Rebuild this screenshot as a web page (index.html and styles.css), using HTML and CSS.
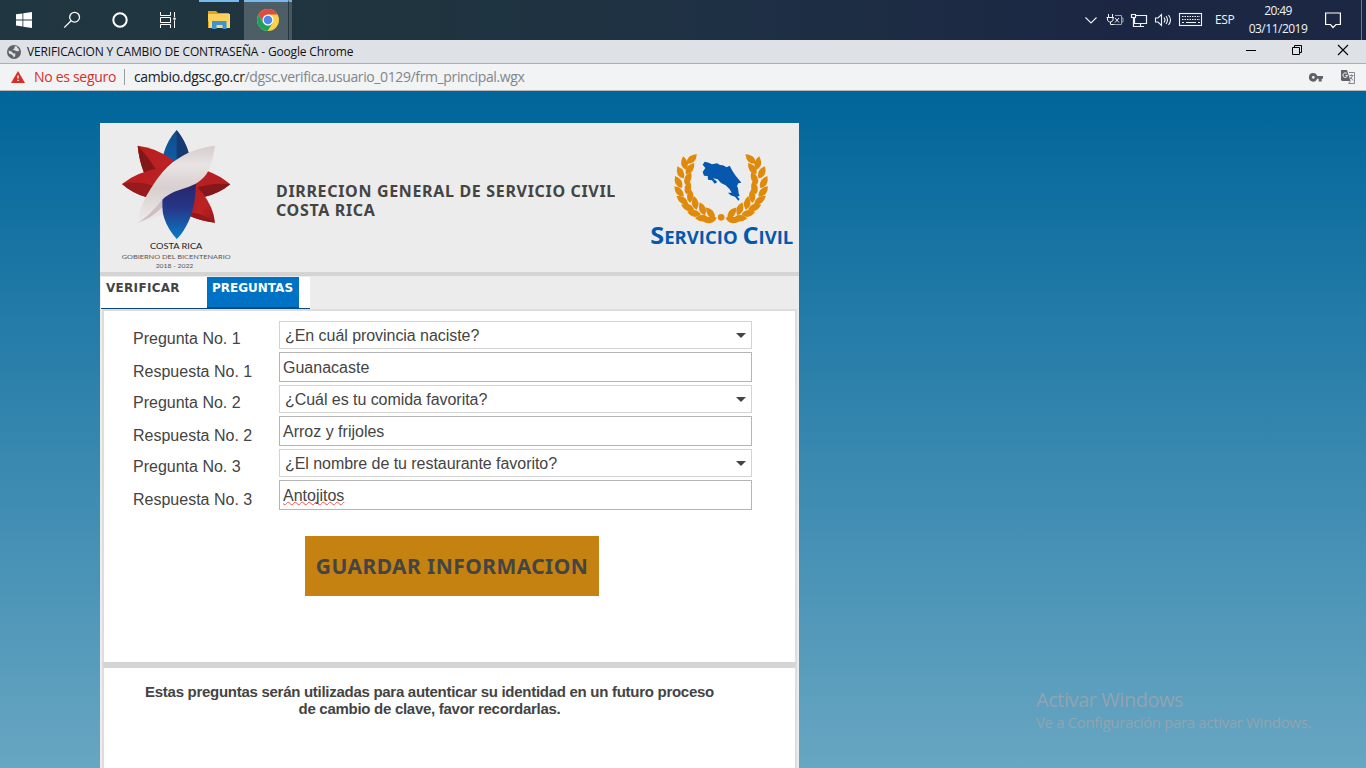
FILE: index.html
```html
<!DOCTYPE html>
<html lang="es">
<head>
<meta charset="utf-8">
<title>VERIFICACION Y CAMBIO DE CONTRASEÑA</title>
<link rel="stylesheet" href="styles.css">
</head>
<body>
<header class="taskbar">
  <div class="launchers">
    <div class="launcher"><svg width="16" height="16" viewBox="0 0 16 16" fill="#fff"><path d="M0 2.3 6.5 1.4V7.6H0zM7.3 1.2 16 0V7.6H7.3zM0 8.4H6.5V14.5L0 13.6zM7.3 8.4H16V16L7.3 14.7z"/></svg></div>
    <div class="launcher"><svg width="18" height="18" viewBox="0 0 18 18" fill="none" stroke="#fff" stroke-width="1.3"><circle cx="11.6" cy="6.2" r="4.9"/><path d="M8.1 9.7 1.2 16.6"/></svg></div>
    <div class="launcher"><svg width="18" height="18" viewBox="0 0 18 18" fill="none" stroke="#fff" stroke-width="2"><circle cx="9" cy="9" r="6.7"/></svg></div>
    <div class="launcher"><svg width="18" height="16" viewBox="0 0 18 16" fill="none" stroke="#fff"><path d="M1.5 0V3.5H11.5V0M1.5 16V12.5H11.5V16M1.5 5.5H11.5V10.5H1.5zM15.5 0V16" stroke-width="1"/><path d="M14 5.500H17V8H14z" fill="#fff" stroke="#20323f" stroke-width=".6"/></svg></div>
    <div class="launcher open"><svg width="22" height="18" viewBox="0 0 22 18"><path d="M0 0H8L10 2H21V17H0z" fill="#e5a50f"/><path d="M1 3H22V17H1z" fill="#ffda6a"/><path d="M0 3H21V10H0z" fill="#fbd15b"/><path d="M4 18V10H18.500V18H14.500V14H8.500V18z" fill="#3c94d4"/></svg></div>
    <div class="launcher open current"><svg width="22" height="22" viewBox="0 0 22 22"><circle cx="11" cy="11" r="11" fill="#fdd149"/><path d="M1.500 5.500A11 11 0 0 1 20.500 5.500H11L6.200 13.800z" fill="#df4b3c"/><path d="M1.500 5.500A11 11 0 0 0 10.500 22L15.800 13.800 11 16.500 6.200 13.800z" fill="#1ba260"/><circle cx="11" cy="11" r="5.500" fill="#fff"/><circle cx="11" cy="11" r="4.300" fill="#4a88ee"/></svg></div>
    <div class="stack-edge"></div>
  </div>
  <div class="tray">
    <svg class="tray-icons" width="120" height="20" viewBox="0 0 120 20" fill="none" stroke="#eef1f5" stroke-width="1.1">
      <path d="M1.500 7.500 7 13 12.500 7.500"/>
      <g stroke-width="1"><path d="M24.500 4V7M28.500 4V7M22.500 7.500H30M23.500 8V10.500L25.500 12H27L29 10.500V8M26.500 12V14.500H30"/><path d="M31 5.500H37.500V14.500H30M37.500 8H39V12H37.500" stroke="#98a2b1"/><path d="M31 8 35 12.500M35 8 31 12.500"/></g>
      <g stroke-width="1.2"><path d="M52 5.500H62.500V13.500H50.500V8M47.500 4.500H51.500V7.500H47.500zM49.500 8V16.500H58M56.500 13.500V16.500H60"/></g>
      <path d="M71.500 8H74L77.500 4.500V15.500L74 12H71.500zM80 7.500Q82 10 80 12.500M82 6Q85 10 82 14M84.500 5Q88.500 10 84.500 15"/>
      <rect x="95.500" y="3.500" width="22" height="12"/>
      <path d="M98 6.500H116M98 9.500H116" stroke-dasharray="1.500 1"/><path d="M98 12.500H100M102 12.500H112M114 12.500H116"/>
    </svg>
    <span class="lang">ESP</span>
    <div class="clock"><span class="time">20:49</span><span class="date">03/11/2019</span></div>
    <svg class="notice" width="16" height="17" viewBox="0 0 16 17" fill="none" stroke="#fff" stroke-width="1.2"><path d="M.6 1H15.400V12.500H11L8 15.500 5.500 12.500H.6z"/></svg>
    <div class="show-desktop"></div>
  </div>
</header>

<div class="titlebar">
  <svg class="globe" width="14" height="14" viewBox="0 0 14 14"><circle cx="7" cy="7" r="7" fill="#5f6368"/><path d="M1.500 5.500 4.500 6.500 6.500 8.500H8.500L8 11.500 6.500 12.500Q7 11 4.500 9.500L2 8.500zM7.500 1.300H9.500L12.300 5 11 6.500 8 5.500 5.500 4.500 7.500 3.500z" fill="#dee1e6"/></svg>
  <span class="window-title">VERIFICACION Y CAMBIO DE CONTRASEÑA - Google Chrome</span>
  <svg class="window-controls" width="104" height="12" viewBox="0 0 104 12" fill="none" stroke="#000"><path d="M0 6.500H10"/><path d="M46.500 3.500H53.500V10.500H46.500zM48.500 3V1.500H55.500V8.500H54"/><path d="M92 1 102 11M102 1 92 11" stroke-width="1.100"/></svg>
</div>

<div class="addressbar">
  <svg class="warning" width="14" height="12" viewBox="0 0 14 12"><path d="M7 0 14 12H0z" fill="#d93025"/><path d="M6.300 4.500H7.700V7.500H6.300zM6.300 8.700H7.700V10.100H6.300z" fill="#fff"/></svg>
  <span class="insecure">No es seguro</span>
  <span class="divider"></span>
  <span class="url"><b>cambio.dgsc.go.cr</b>/dgsc.verifica.usuario_0129/frm_principal.wgx</span>
  <div class="page-actions">
    <svg width="14" height="9" viewBox="0 0 14 9"><path fill-rule="evenodd" d="M4.300 0A4.300 4.300 0 0 1 8.200 3H14V5.800H12.700V8.500H9.700V5.800H8.200A4.300 4.300 0 1 1 4.300 0M4.300 2.900A1.400 1.400 0 1 0 4.300 5.700 1.400 1.400 0 0 0 4.300 2.900" fill="#5f6368"/></svg>
    <svg width="14" height="14" viewBox="0 0 14 14" fill="none"><path d="M0 0H6L9.500 11H1L0 10z" fill="#5f6368"/><path d="M8 2.500H13.500V13.500H7.500L9.500 11" stroke="#85898d"/><path d="M6 3.700A2.300 2.300 0 1 0 6.500 5.500H4.500" stroke="#fff"/><path d="M8.500 5.500H12.500M10.500 4.500V5.500M11.500 5.500Q11 8 9 9M9.500 7 12 10.500" stroke="#777b80" stroke-width=".9"/></svg>
  </div>
</div>

<main class="page">
  <section class="panel">
    <div class="banner">
      <svg class="star-logo" width="160" height="149" viewBox="0 9 480 447">
        <defs>
          <linearGradient id="blueTop" x2="0" y2="1"><stop stop-color="#124a86"/><stop offset="1" stop-color="#0b65b0"/></linearGradient>
          <linearGradient id="blueBottom" x2="0" y2="1"><stop stop-color="#292065"/><stop offset=".5" stop-color="#26398a"/><stop offset="1" stop-color="#087cc8"/></linearGradient>
          <linearGradient id="red" x2="1" y2="1"><stop stop-color="#b51d1d"/><stop offset=".6" stop-color="#bd2224"/><stop offset="1" stop-color="#951719"/></linearGradient>
          <linearGradient id="silver" x2="0" y2="1"><stop stop-color="#d6cccc"/><stop offset=".25" stop-color="#e9e3e3"/><stop offset=".55" stop-color="#d8cfcf"/><stop offset="1" stop-color="#efebeb"/></linearGradient>
        </defs>
        <path d="M230 30Q256 62 267 101L260 150H200L191 100Q203 59 230 30" fill="url(#blueTop)"/>
        <path d="M230 30Q256 62 267 101L260 150H230z" fill="#173b70"/>
        <path d="M113 77Q170 83 218 120L230 130 200 190 132 158Q117 120 113 77" fill="url(#red)"/>
        <path d="M113 77Q144 109 169 149L132 158Q117 120 113 77" fill="#821719"/>
        <path d="M66 192Q112 155 190 142L240 140 160 245 140 232Q96 219 66 192" fill="url(#red)"/>
        <path d="M66 192Q111 181 162 197L140 232Q96 219 66 192" fill="#971b1c"/>
        <path d="M320 152Q360 166 391 193Q355 222 312 231L270 240V190z" fill="#b72022"/>
        <path d="M391 193Q339 187 282 206L312 231Q355 222 391 193" fill="#831719"/>
        <path d="M282 190L308 220Q341 263 345 308Q303 304 265 286z" fill="url(#red)"/>
        <path d="M273 277Q311 281 345 308Q305 304 268 288" fill="#951719"/>
        <path d="M187 225L288 180Q288 269 257 321Q244 345 230 357Q177 298 187 225" fill="url(#blueBottom)"/>
        <path d="M345 77Q340 118 325 152C310 181 286 194 256 204C232 212 207 219 187 239L187 286Q153 303 113 308Q121 252 153 205Q183 155 218 127C261 94 300 83 345 77" fill="url(#silver)"/>
        <path d="M113 308C142 292 164 266 186 240V262Q155 296 113 308" fill="#cdbfbf"/>
      </svg>
      <h1 class="heading"><span>DIRRECION GENERAL DE SERVICIO CIVIL</span><span>COSTA RICA</span></h1>
      <svg class="civil-logo" width="159" height="120" viewBox="0 0 477 360">
        <defs>
          <path id="leaf" d="M0 20Q-21 3 0-22Q19 1 0 20"/>
          <g id="branch" fill="#e08a0b">
            <use href="#leaf" transform="translate(134 70) rotate(-12)"/>
            <use href="#leaf" transform="translate(122 98) rotate(-27)"/>
            <use href="#leaf" transform="translate(116 127) rotate(-30)"/>
            <use href="#leaf" transform="translate(118 155) rotate(-43)"/>
            <use href="#leaf" transform="translate(128 180) rotate(-57)"/>
            <use href="#leaf" transform="translate(144 202) rotate(-70)"/>
            <use href="#leaf" transform="translate(163 220) rotate(-80)"/>
            <use href="#leaf" transform="translate(187 234) rotate(-91)"/>
            <use href="#leaf" transform="translate(211 239) rotate(-106)"/>
            <use href="#leaf" transform="translate(155 58) rotate(46)"/>
            <use href="#leaf" transform="translate(150 87) rotate(36)"/>
            <use href="#leaf" transform="translate(144 116) rotate(25)"/>
            <use href="#leaf" transform="translate(144 144) rotate(13)"/>
            <use href="#leaf" transform="translate(151 169) rotate(3)"/>
            <use href="#leaf" transform="translate(166 190) rotate(-10)"/>
            <use href="#leaf" transform="translate(188 207) rotate(-22)"/>
            <use href="#leaf" transform="translate(212 219) rotate(-40)"/>
          </g>
        </defs>
        <use href="#branch"/><use href="#branch" transform="translate(487 0) scale(-1 1)"/>
        <circle cx="243.500" cy="232" r="10" fill="#e08a0b"/>
        <path d="M194 65 206 68 216 73 231 70 240 75 249 76 260 82 269 77 278 94 287 107 300 123 304 128 295 130 291 138 294 145 296 160 299 167 292 170 299 177 295 182 285 170 272 166 264 158 275 158 269 148 257 136 243 129 233 118 219 115 232 126 224 131 216 121 204 119 203 108 192 107 188 96 196 84 188 74z" fill="#0658ae"/>
        <text class="civil-name" x="31" y="313" textLength="429" lengthAdjust="spacingAndGlyphs"><tspan class="cap">S</tspan>ERVICIO <tspan class="cap">C</tspan>IVIL</text>
      </svg>
      <svg class="star-caption" width="112" height="30" viewBox="0 0 336 90">
        <text class="gov-title" x="87" y="19" textLength="157" lengthAdjust="spacingAndGlyphs">COSTA RICA</text>
        <text class="gov-sub" x="2" y="48" textLength="327" lengthAdjust="spacingAndGlyphs">GOBIERNO DEL BICENTENARIO</text>
        <text class="gov-sub" x="104" y="74" textLength="113" lengthAdjust="spacingAndGlyphs">2018 - 2022</text>
      </svg>
    </div>
    <nav class="tabs"><div class="tab first">VERIFICAR</div><div class="tab active">PREGUNTAS</div><div class="tab-end"></div></nav>
    <div class="content">
      <form class="questions">
        <label>Pregunta No. 1</label><div class="select">¿En cuál provincia naciste?</div>
        <label>Respuesta No. 1</label><div class="input">Guanacaste</div>
        <label>Pregunta No. 2</label><div class="select">¿Cuál es tu comida favorita?</div>
        <label>Respuesta No. 2</label><div class="input">Arroz y frijoles</div>
        <label>Pregunta No. 3</label><div class="select">¿El nombre de tu restaurante favorito?</div>
        <label>Respuesta No. 3</label><div class="input"><span class="misspelled">Antojitos</span></div>
      </form>
      <button class="save">GUARDAR INFORMACION</button>
    </div>
    <div class="note">Estas preguntas serán utilizadas para autenticar su identidad en un futuro proceso<br>de cambio de clave, favor recordarlas.</div>
  </section>
  <aside class="activation"><div class="activation-title">Activar Windows</div><div class="activation-text">Ve a Configuración para activar Windows.</div></aside>
</main>
</body>
</html>
```
FILE: styles.css
```css
* { box-sizing: border-box; }
body { margin: 0; width: 1366px; height: 768px; overflow: hidden; font-family: "Open Sans", sans-serif; display: flex; flex-direction: column; }
svg { display: block; flex: none; }
.taskbar { height: 40px; flex: none; display: flex; justify-content: space-between; color: #f1f3f6; background: linear-gradient(90deg, #203640, #1f343f 30%, #1e3044 55%, #1b2643 82%, #1b2843); }
.launchers { display: flex; height: 40px; }
.launcher { width: 48px; display: flex; align-items: center; justify-content: center; }
.launcher.open { width: 40px; margin-left: 7px; border-top: 2px solid #76b9ed; padding-bottom: 2px; }
.launcher.current { width: 44px; margin-left: 5px; background: #4d5e66; padding-left: 3px; }
.stack-edge { width: 4px; background: #485861; border-left: 1px solid #26373f; border-top: 2px solid #6daedf; }
.tray { display: flex; align-items: center; }
.tray-icons { margin-right: 11px; }
.lang { width: 20px; font-size: 12px; letter-spacing: -.4px; line-height: 20px; white-space: nowrap; }
.clock { width: 60px; margin-left: 13px; display: flex; flex-direction: column; align-items: center; font-size: 12px; line-height: 18px; white-space: nowrap; }
.time { letter-spacing: -.6px; }
.date { letter-spacing: -.5px; }
.notice { margin-left: 17px; }
.show-desktop { width: 5px; height: 40px; margin-left: 20px; border-left: 1px solid #717a8d; }
.titlebar { height: 24px; flex: none; background: #dee1e6; border-bottom: 1px solid #adb0b3; display: flex; align-items: center; padding: 0 16px 0 7px; }
.window-title { margin-left: 6px; font-size: 12px; letter-spacing: -.16px; color: #111; white-space: nowrap; }
.window-controls { margin-left: auto; margin-bottom: 3px; }
.addressbar { height: 27px; flex: none; background: #f1f3f4; border-bottom: 1px solid #b9b9b7; display: flex; align-items: center; padding: 0 11px; font-size: 14px; line-height: 20px; white-space: nowrap; }
.insecure { margin-left: 9px; width: 82px; letter-spacing: -.3px; color: #d93025; }
.divider { width: 1px; height: 16px; margin: 0 9px 0 8px; background: #9a9da0; }
.url { letter-spacing: -.38px; color: #80868b; }
.url b { font-weight: 400; color: #202124; }
.page-actions { display: flex; align-items: center; gap: 18px; margin-left: auto; }
.page { flex: 1; min-height: 0; display: flex; align-items: flex-start; padding: 32px 0 0 100px; background: linear-gradient(#00659a, #68a6c2); }
.panel { width: 699px; height: 645px; background: #ececec; color: #444; font-family: "Liberation Sans", Arial, sans-serif; font-size: 16px; }
.banner { position: relative; height: 153px; border-bottom: 4px solid #d4d4d4; display: flex; }
.star-caption { position: absolute; left: 21px; top: 120px; }
.heading { width: 364px; margin: 59px 0 0 16px; display: flex; flex-direction: column; font: bold 16px/19px "Noto Sans", Tahoma, sans-serif; letter-spacing: .67px; white-space: nowrap; }
.civil-logo { margin-top: 17px; }
.gov-title { font: 22px Lato, sans-serif; fill: #222; }
.gov-sub { font: 19px Lato, sans-serif; fill: #555; }
.civil-name { font: bold 52px "Open Sans", sans-serif; fill: #0658ae; }
.cap { font-size: 71px; }
.tabs { height: 33px; padding: 1px 0 0 1px; display: flex; font: bold 12px/23px "DejaVu Sans", Verdana, sans-serif; }
.tab { height: 32px; padding-left: 5px; border-bottom: 1px solid #064981; background: #fff; }
.tab.first { width: 106px; letter-spacing: .3px; }
.tab.active { width: 92px; color: #fff; background: #0072c6; border-bottom-width: 2px; }
.tab-end { width: 11px; background: #fff; border-bottom: 1px solid #064981; }
.content { height: 353px; margin: 0 2px; border: 2px solid #ddd; border-bottom: 0; background: #fff; padding: 10px 43px 0 29px; }
.questions { display: grid; grid-template-columns: 146px 473px; grid-template-rows: repeat(3, 31px 33px); }
.questions label { padding-top: 9px; line-height: 18px; }
.questions label:nth-of-type(even) { padding-top: 11px; }
.select { position: relative; height: 28px; border: 1px solid #d3d3d3; line-height: 27px; padding-left: 5px; letter-spacing: -.05px; }
.select::after { content: ""; position: absolute; right: 5px; top: 11px; border: 5px solid transparent; border-top-color: #444; border-bottom: 0; }
.input { height: 30px; border: 1px solid #b5b5b5; line-height: 30px; padding-left: 3px; }
.misspelled { text-decoration: underline wavy #f05050 1px; text-underline-offset: 0; text-decoration-skip-ink: none; }
.save { display: block; width: 294px; height: 60px; margin: 23px 0 0 172px; padding: 0; border: 0; background: #c58211; color: #444; font: bold 21px/60px "Noto Sans", sans-serif; letter-spacing: .43px; white-space: nowrap; }
.note { height: 107px; margin: 0 2px; border: 2px solid #ddd; border-top: 6px solid #d5d5d5; border-bottom: 0; background: #fff; padding: 15px 80px 0 40px; text-align: center; font-weight: bold; font-size: 15px; line-height: 17px; letter-spacing: -.28px; white-space: nowrap; }
.activation { margin: 564px 0 0 237px; color: #91a4af; white-space: nowrap; }
.activation-title { font-size: 20px; line-height: 26px; letter-spacing: -.45px; }
.activation-text { font-size: 15px; line-height: 18px; letter-spacing: -.35px; }
```
